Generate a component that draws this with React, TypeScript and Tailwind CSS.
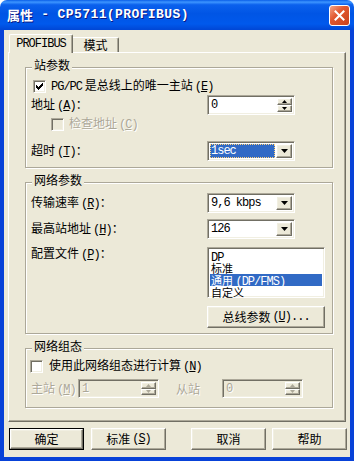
import React from "react";

const raised =
  "border border-t-white border-l-white border-r-[#716f64] border-b-[#716f64] shadow-[inset_-1px_-1px_0_#aca899,inset_1px_1px_0_#f1efe2]";
const sunken =
  "border border-t-[#aca899] border-l-[#aca899] border-r-white border-b-white shadow-[inset_1px_1px_0_#716f64,inset_-1px_-1px_0_#f1efe2]";
const etched = "border border-[#aca899] shadow-[inset_1px_1px_0_#fff,1px_1px_0_#fff]";
const grayText = "text-[#aca899] [text-shadow:1px_1px_0_#fff]";

const M = ({ children, className = "" }: { children: React.ReactNode; className?: string }) => (
  <span className={`font-['Liberation_Mono',monospace] text-[12px] tracking-[-1px] ${className}`}>{children}</span>
);

const Key = ({ k }: { k: string }) => (
  <M className="ml-[2px]">
    (<span className="underline">{k}</span>)
  </M>
);

const Check = ({ checked = false, disabled = false }) => (
  <div
    className={`w-[13px] h-[13px] shrink-0 flex items-center justify-center ${sunken} ${
      disabled ? "bg-[#ece9d8]" : "bg-white"
    }`}
  >
    {checked && (
      <svg width="7" height="7" viewBox="0 0 7 7" shapeRendering="crispEdges">
        <polygon points="0,2 0,5 2,7 7,2 7,-1 2,4" fill="#000" />
      </svg>
    )}
  </div>
);

const Arrow = ({ up = false, size = 7, color = "#000" }) => {
  const h = Math.ceil(size / 2);
  return (
    <svg width={size} height={h} viewBox={`0 0 ${size} ${h}`}>
      <polygon points={up ? `0,${h} ${size},${h} ${size / 2},0` : `0,0 ${size},0 ${size / 2},${h}`} fill={color} />
    </svg>
  );
};

const Spin = ({ value, className = "", disabled = false }: { value: string; className?: string; disabled?: boolean }) => (
  <div className={`flex p-[2px] ${sunken} ${disabled ? "bg-[#ece9d8]" : "bg-white"} ${className}`}>
    <div className={`flex-1 flex items-center pl-[1px] ${disabled ? grayText : ""}`}>
      <M>{value}</M>
    </div>
    <div className="w-[15px] flex flex-col">
      <div className={`flex-1 flex items-center justify-center bg-[#ece9d8] ${raised}`}>
        <Arrow up size={5} color={disabled ? "#aca899" : "#000"} />
      </div>
      <div className={`flex-1 flex items-center justify-center bg-[#ece9d8] ${raised}`}>
        <Arrow size={5} color={disabled ? "#aca899" : "#000"} />
      </div>
    </div>
  </div>
);

const Combo = ({ value, selected = false }: { value: string; selected?: boolean }) => (
  <div className={`w-[88px] h-[20px] flex p-[2px] bg-white ${sunken}`}>
    <div className="flex-1 flex items-center pr-[1px]">
      <div
        className={`flex-1 h-full flex items-center pl-[1px] ${
          selected ? "bg-[#316ac5] text-white outline-1 outline-dotted outline-[#ffd27a] -outline-offset-1" : ""
        }`}
      >
        <M>{value}</M>
      </div>
    </div>
    <div className={`w-[16px] flex items-center justify-center bg-[#ece9d8] ${raised}`}>
      <Arrow size={7} />
    </div>
  </div>
);

const Group = ({ title, className = "", children }: { title: string; className?: string; children: React.ReactNode }) => (
  <div className={`relative w-[308px] ${etched} ${className}`}>
    <span className="absolute -top-[10px] left-[6px] px-[2px] bg-[#ece9d8] leading-[14px]">{title}</span>
    {children}
  </div>
);

const Row = ({ label, children, className = "" }: { label: React.ReactNode; children: React.ReactNode; className?: string }) => (
  <div className={`flex items-center pl-[5px] ${className}`}>
    <div className="w-[176px] leading-[14px]">{label}</div>
    {children}
  </div>
);

const Button = ({ children, isDefault = false, className = "" }: { children: React.ReactNode; isDefault?: boolean; className?: string }) =>
  isDefault ? (
    <div className={`h-[22px] border border-black ${className}`}>
      <div className={`h-full flex items-center justify-center ${raised}`}>{children}</div>
    </div>
  ) : (
    <div className={`h-[22px] flex items-center justify-center ${raised} ${className}`}>{children}</div>
  );

const profiles = [
  { text: <M>DP</M> },
  { text: "标准" },
  {
    text: (
      <>
        通用 <M>(DP/FMS)</M>
      </>
    ),
    selected: true,
  },
  { text: "自定义" },
];

export default function App() {
  return (
    <div className="w-[354px] h-[461px] flex flex-col font-['Noto_Sans_CJK_SC',sans-serif] text-[12px] text-black select-none">
      <div className="h-[30px] shrink-0 rounded-t-[7px] bg-[linear-gradient(to_bottom,#0a5fe8_0%,#3d95ff_7%,#0b61ed_16%,#0055e5_45%,#0059ec_80%,#0046d5_100%)] flex items-center pl-[7px] pr-[4px]">
        <div className="flex-1 text-white font-bold text-[13px] [text-shadow:1px_1px_0_#0a1883] flex items-center whitespace-pre">
          <span>属性</span>
          <span className="font-['Liberation_Mono',monospace] text-[13px] tracking-[0.4px]">{" - CP5711(PROFIBUS)"}</span>
        </div>
        <div className="w-[21px] h-[21px] rounded-[3px] border border-white bg-[linear-gradient(135deg,#f4a588_0%,#e2582f_40%,#c8421c_100%)] flex items-center justify-center">
          <svg width="11" height="11" viewBox="0 0 11 11">
            <path d="M1.5 1.5L9.5 9.5M9.5 1.5L1.5 9.5" stroke="#fff" strokeWidth="2" strokeLinecap="square" />
          </svg>
        </div>
      </div>

      <div className="flex-1 flex flex-col bg-[#ece9d8] border-x-[4px] border-b-[4px] border-[#0842d8]">
        <div className="pt-[4px] pl-[4px]">
          <div className="relative z-10 h-[19px] flex items-end pl-[1px]">
            <div className="w-[64px] h-[19px] bg-[#ece9d8] border-l border-t border-white border-r border-r-[#716f64] rounded-t-[2px] shadow-[inset_-1px_0_0_#aca899] flex items-center justify-center">
              <M>PROFIBUS</M>
            </div>
            <div className="w-[46px] h-[15px] mb-[1px] bg-[#ece9d8] border-t border-white border-r border-r-[#716f64] rounded-tr-[2px] shadow-[inset_-1px_0_0_#aca899] flex items-center justify-center leading-[14px]">
              模式
            </div>
          </div>

          <div className="-mt-[1px] w-[338px] h-[370px] pl-[16px] pt-[14px] border border-t-white border-l-white border-r-[#716f64] border-b-[#716f64] shadow-[inset_-1px_-1px_0_#aca899]">
            <Group title="站参数" className="h-[101px] pt-[11px]">
              <div className="h-[14px] flex items-center pl-[7px] gap-[5px]">
                <Check checked />
                <span className="leading-[14px]">
                  <M>PG/PC</M> 是总线上的唯一主站<Key k="E" />
                </span>
              </div>
              <Row className="mt-[2px] h-[20px]" label={<>地址<Key k="A" />：</>}>
                <Spin value="0" className="w-[88px] h-[20px]" />
              </Row>
              <div className="mt-[2px] h-[14px] flex items-center pl-[25px] gap-[5px]">
                <Check disabled />
                <span className={`leading-[14px] ${grayText}`}>
                  检查地址<Key k="C" />
                </span>
              </div>
              <Row className="mt-[10px] h-[20px]" label={<>超时<Key k="T" />：</>}>
                <Combo value="1sec" selected />
              </Row>
            </Group>

            <Group title="网络参数" className="mt-[14px] h-[152px] pt-[10px]">
              <Row className="h-[20px]" label={<>传输速率<Key k="R" />：</>}>
                <Combo value="9,6 kbps" />
              </Row>
              <Row className="mt-[6px] h-[20px]" label={<>最高站地址<Key k="H" />：</>}>
                <Combo value="126" />
              </Row>
              <div className="mt-[8px] flex items-start pl-[5px]">
                <div className="w-[176px] leading-[14px] -mt-[1px]">
                  配置文件<Key k="P" />：
                </div>
                <div className="flex flex-col gap-[8px]">
                  <div className={`w-[118px] h-[51px] p-[2px] bg-white ${sunken}`}>
                    {profiles.map((p, i) => (
                      <div
                        key={i}
                        className={`h-[12px] leading-[12px] text-[11px] pl-[1px] whitespace-nowrap ${
                          p.selected ? "bg-[#316ac5] text-white" : ""
                        }`}
                      >
                        {p.text}
                      </div>
                    ))}
                  </div>
                  <Button className="w-[118px] h-[20px]">
                    总线参数<Key k="U" />
                    <M>...</M>
                  </Button>
                </div>
              </div>
            </Group>

            <Group title="网络组态" className="mt-[14px] h-[60px] pt-[10px]">
              <div className="h-[14px] flex items-center pl-[4px] gap-[6px]">
                <Check />
                <span className="leading-[14px]">
                  使用此网络组态进行计算<Key k="N" />
                </span>
              </div>
              <div className="mt-[6px] h-[19px] flex items-center pl-[5px]">
                <div className={`w-[47px] leading-[14px] ${grayText}`}>
                  主站<Key k="M" />
                </div>
                <Spin value="1" disabled className="w-[81px] h-[19px]" />
                <div className={`ml-[17px] w-[46px] leading-[14px] ${grayText}`}>从站</div>
                <Spin value="0" disabled className="w-[81px] h-[19px]" />
              </div>
            </Group>
          </div>
        </div>

        <div className="mt-[6px] flex pl-[5px]">
          <Button isDefault className="w-[75px]">
            确定
          </Button>
          <Button className="w-[75px] ml-[7px]">
            标准<Key k="S" />
          </Button>
          <Button className="w-[75px] ml-[25px]">取消</Button>
          <Button className="w-[75px] ml-[6px]">帮助</Button>
        </div>
      </div>
    </div>
  );
}
